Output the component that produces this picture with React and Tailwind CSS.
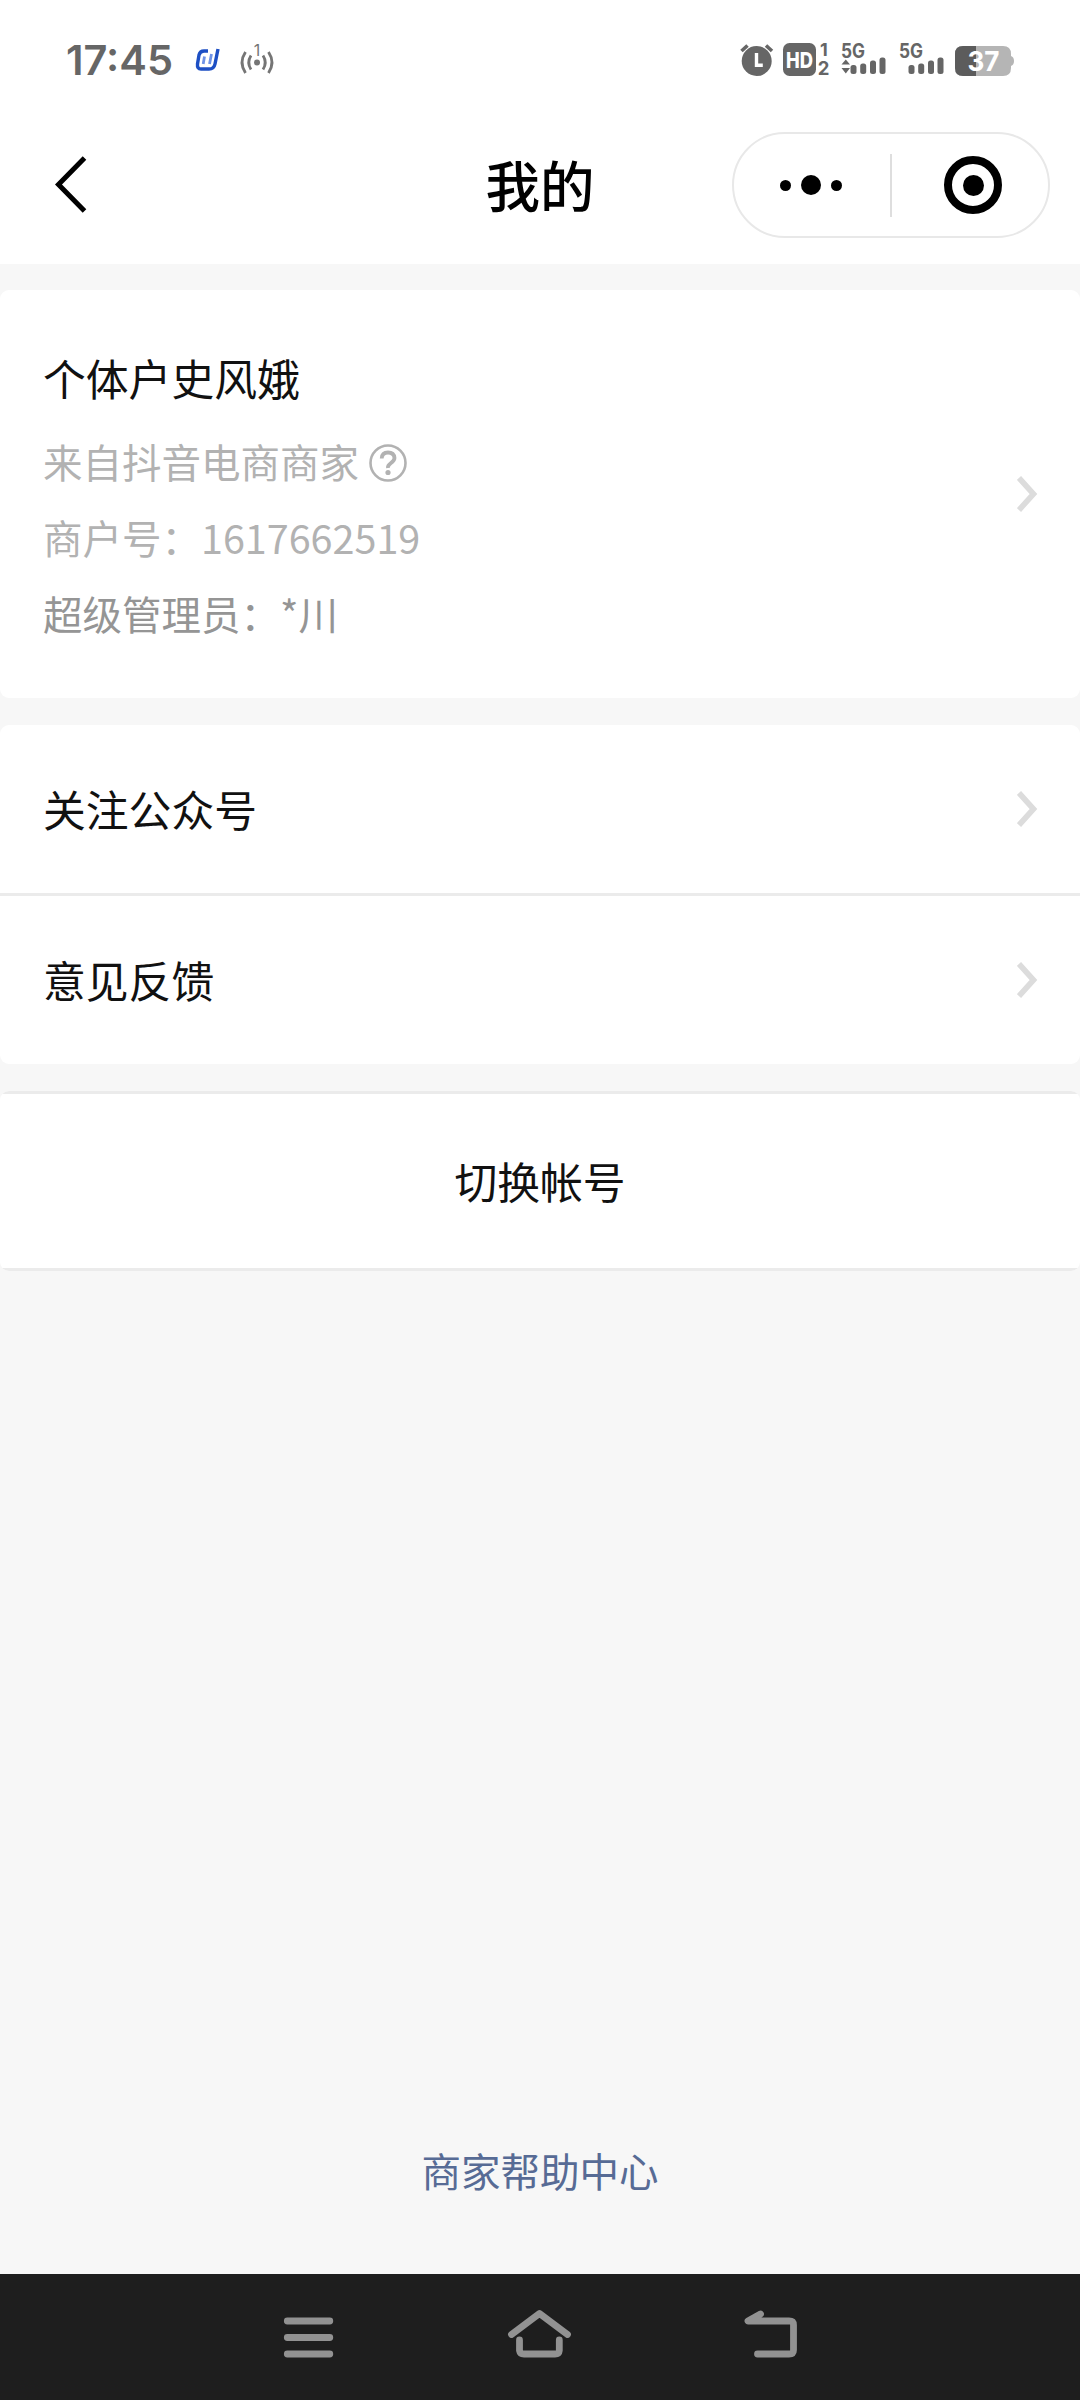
import React from "react";

const AppLogoIcon = () => (
  <svg width="26" height="26" viewBox="0 0 26 26" fill="none">
    <path
      d="M13 4H9Q5 4 4 8L2.500 17Q2 22 6 22H14Q19 22 20 17L23 2"
      stroke="#1d4fc4"
      strokeWidth="3.400"
    />
    <path d="M9.500 9.500L8.200 17M16.500 7L14.500 17" stroke="#6f93e6" strokeWidth="2.800" />
  </svg>
);

const HotspotIcon = () => (
  <svg className="overflow-visible" width="36" height="34" viewBox="0 0 36 34" fill="none">
    <g stroke="#757575" strokeWidth="2.800">
      <path d="M6.500 9Q-0.500 19.500 6.500 30" />
      <path d="M12 12.500Q7.500 19.500 12 26.500" />
      <path d="M24 12.500Q28.500 19.500 24 26.500" />
      <path d="M29.500 9Q36.500 19.500 29.500 30" />
    </g>
    <circle cx="18" cy="19.500" r="3" fill="#757575" />
    <text x="18" y="13" textAnchor="middle" fontSize="16" fill="#757575">
      1
    </text>
  </svg>
);

const AlarmIcon = () => (
  <svg width="34" height="34" viewBox="0 0 34 34" fill="none">
    <circle cx="16.700" cy="18" r="15" fill="#666" />
    <path d="M1.500 8L7.500 2.500M26 2.500L32 8" stroke="#666" strokeWidth="3.600" />
    <path d="M16.500 10V22.200H22.800" stroke="#fff" strokeWidth="3.400" />
  </svg>
);

const HdIcon = () => (
  <svg className="overflow-visible" width="47" height="34" viewBox="0 0 47 34" fontWeight="800" fill="#666">
    <rect x="0" y="0" width="33" height="33" rx="6.500" />
    <text x="16.500" y="24.500" textAnchor="middle" fontSize="21.500" textLength="27" lengthAdjust="spacingAndGlyphs" fill="#fff">
      HD
    </text>
    <text x="41" y="13.300" textAnchor="middle" fontSize="18" fontWeight="700">
      1
    </text>
    <text x="40.500" y="32" textAnchor="middle" fontSize="18.500" fontWeight="700">
      2
    </text>
  </svg>
);

const SignalIcon = ({ active }) => (
  <svg className="overflow-visible" width="46" height="34" viewBox="0 0 46 34" fill="#666">
    <text x="0" y="15" fontSize="19.500" fontWeight="700" textLength="24" lengthAdjust="spacingAndGlyphs">
      5G
    </text>
    {active && <path d="M0.500 21.500L4.800 16.500L9 21.500ZM0.500 25L4.800 30.500L9 25Z" />}
    <rect x="9.500" y="22" width="6" height="9" rx="2.500" />
    <rect x="19.200" y="20.500" width="6" height="10.500" rx="2.500" />
    <rect x="29" y="17.500" width="6" height="13.500" rx="2.500" />
    <rect x="38.500" y="14.500" width="6" height="16.500" rx="2.500" />
  </svg>
);

const BatteryIcon = () => (
  <svg className="overflow-visible" width="60" height="32" viewBox="0 0 60 32">
    <path d="M8 1H48Q56 1 56 9V11Q59 12 59 16T56 21V23Q56 31 48 31H8Q0 31 0 23V9Q0 1 8 1Z" fill="#b5b5b5" />
    <path d="M8 1H21V31H8Q0 31 0 23V9Q0 1 8 1Z" fill="#5c5c5c" />
    <text
      x="28.500"
      y="26"
      textAnchor="middle"
      fontSize="27.500"
      fontWeight="700"
      textLength="32"
      lengthAdjust="spacingAndGlyphs"
      fill="#fff"
    >
      37
    </text>
  </svg>
);

const StatusBar = () => (
  <div className="flex h-[120px] items-center justify-between pl-[66px] pr-[65px] font-['Inter',sans-serif]">
    <div className="flex items-center">
      <span className="w-[107px] whitespace-nowrap text-[41.500px] font-semibold leading-[50px] text-[#666]">17:45</span>
      <div className="ml-[22px]">
        <AppLogoIcon />
      </div>
      <div className="ml-[18px]">
        <HotspotIcon />
      </div>
    </div>
    <div className="flex items-center">
      <AlarmIcon />
      <div className="ml-[9px]">
        <HdIcon />
      </div>
      <div className="ml-[11px]">
        <SignalIcon active />
      </div>
      <div className="ml-[12px]">
        <SignalIcon />
      </div>
      <div className="ml-[10px] mt-[2px]">
        <BatteryIcon />
      </div>
    </div>
  </div>
);

const Header = () => (
  <div className="grid h-[144px] grid-cols-3 pb-[14px]">
    <div className="flex items-center pl-[54px]">
      <svg width="36" height="60" viewBox="0 0 36 60" fill="none">
        <path d="M30.500 3L4.500 29.500L30.500 56" stroke="#000" strokeWidth="5" />
      </svg>
    </div>
    <h1 className="flex items-center justify-center pb-[2px] text-[54.500px] font-medium leading-none text-black">我的</h1>
    <div className="flex items-center justify-end pr-[30px]">
      <div className="flex h-[106px] w-[318px] shrink-0 items-center rounded-full border-2 border-[#e8e8e8]">
        <div className="flex w-[156px] items-center justify-center gap-[10px] pr-[2px]">
          <span className="size-[11px] rounded-full bg-black" />
          <span className="size-[20px] rounded-full bg-black" />
          <span className="size-[11px] rounded-full bg-black" />
        </div>
        <div className="h-[63px] w-[2px] bg-[#dedede]" />
        <div className="flex flex-1 justify-center pl-[6px]">
          <div className="flex size-[58px] items-center justify-center rounded-full border-8 border-black">
            <span className="size-[21px] rounded-full bg-black" />
          </div>
        </div>
      </div>
    </div>
  </div>
);

const Chevron = () => (
  <svg width="22" height="38" viewBox="0 0 22 38" fill="none">
    <path d="M2 3L16.500 19L2 35" stroke="#dcdcdc" strokeWidth="5.600" />
  </svg>
);

const MenuRow = ({ label }) => (
  <div className="flex h-[168px] items-center justify-between pl-[43px] pr-[41px]">
    <span className="pb-[2px] text-[42.800px] leading-none text-[#111]">{label}</span>
    <Chevron />
  </div>
);

const MerchantCard = () => (
  <div className="mt-[26px] flex h-[408px] items-center justify-between rounded-[9px] bg-white pl-[43px] pr-[41px]">
    <div className="flex flex-col pb-[5px] text-[39.500px] leading-[76px] text-[#b2b2b2]">
      <div className="text-[42.800px] leading-[91px] text-[#111]">个体户史风娥</div>
      <div className="flex items-center">
        来自抖音电商商家
        <svg className="ml-[10px] mt-[3px]" width="38" height="38" viewBox="0 0 38 38" fill="none" stroke="#b2b2b2">
          <circle cx="19" cy="19" r="17.500" strokeWidth="2.600" />
          <path d="M12.700 14.500Q13 8.500 19 8.500T25.500 14Q25.500 16.500 22 19T19 24" strokeWidth="3.800" />
          <circle cx="19" cy="28.500" r="2.600" fill="#b2b2b2" stroke="none" />
        </svg>
      </div>
      <div>商户号：1617662519</div>
      <div className="text-[#959595]">超级管理员：*川</div>
    </div>
    <Chevron />
  </div>
);

const NavBar = () => (
  <div className="flex h-[126px] items-center justify-center gap-[166px] bg-[#1e1e1e]">
    <svg width="64" height="60" viewBox="0 0 64 60" fill="none" stroke="#929292" strokeWidth="6.800" strokeLinecap="round">
      <path d="M10.300 14H52.800M10.300 30.500H52.800M10.300 47H52.800" />
    </svg>
    <svg
      width="66"
      height="60"
      viewBox="0 0 66 60"
      fill="none"
      stroke="#929292"
      strokeWidth="6.800"
      strokeLinecap="round"
      strokeLinejoin="round"
    >
      <path d="M4.500 27.500L32.500 6.500L60.500 27.500" />
      <path d="M12.500 33V43.500Q13 47 17 47H48Q52 47 52.300 43.500V33" />
    </svg>
    <svg
      width="64"
      height="60"
      viewBox="0 0 64 60"
      fill="none"
      stroke="#929292"
      strokeWidth="6.800"
      strokeLinecap="round"
      strokeLinejoin="round"
    >
      <path d="M21.500 7L9 14H50Q54.500 14 54.500 18V43Q54.500 47 50 47H18.500" />
    </svg>
  </div>
);

const App = () => {
  return (
    <div className="flex h-[2400px] w-[1080px] flex-col bg-[#f7f7f7] font-['Noto_Sans_CJK_SC',sans-serif]">
      <div className="bg-white">
        <StatusBar />
        <Header />
      </div>
      <MerchantCard />
      <div className="mt-[27px] overflow-hidden rounded-[9px] bg-white">
        <MenuRow label="关注公众号" />
        <div className="h-[3px] bg-[#ebebeb]" />
        <MenuRow label="意见反馈" />
      </div>
      <div className="mt-[27px] overflow-hidden rounded-[9px]">
        <button className="h-[180px] w-full border-y-[3px] border-[#ebebeb] bg-white pb-[2px] text-[42.800px] leading-none text-[#111]">
          切换帐号
        </button>
      </div>
      <div className="mt-auto flex h-[204px] justify-center text-[39.500px] leading-none text-[#576b95]">
        <span className="mt-[80px]">商家帮助中心</span>
      </div>
      <NavBar />
    </div>
  );
};

export default App;
